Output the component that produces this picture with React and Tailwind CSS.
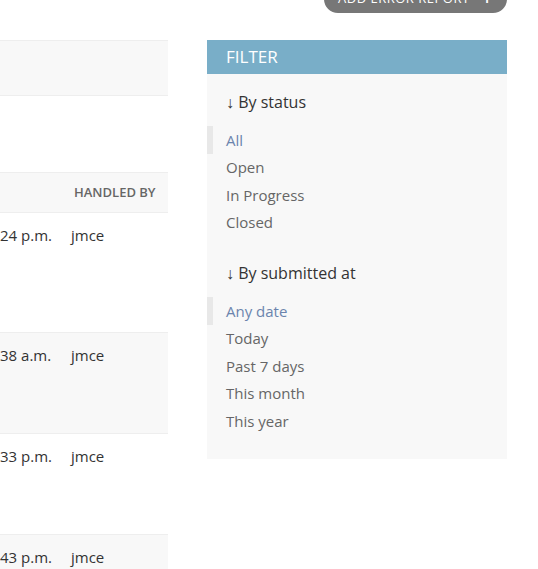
import React from 'react'

const statusChoices = ['All', 'Open', 'In Progress', 'Closed']
const dateChoices = ['Any date', 'Today', 'Past 7 days', 'This month', 'This year']

const rows = [
  { time: '24 p.m.', user: 'jmce', h: 'h-[120px]', bg: 'bg-white' },
  { time: '38 a.m.', user: 'jmce', h: 'h-[101px]', bg: 'bg-[#f8f8f8]' },
  { time: '33 p.m.', user: 'jmce', h: 'h-[101px]', bg: 'bg-white' },
  { time: '43 p.m.', user: 'jmce', h: 'h-[101px]', bg: 'bg-[#f8f8f8]' },
]

const FilterGroup = ({ title, choices }) => (
  <div>
    <h3 className="text-[16px] leading-[24px] text-[#333] pl-[19px]">↓ By {title}</h3>
    <ul className="mt-[12px]">
      {choices.map((c, i) => (
        <li
          key={c}
          className={
            'h-[27.5px] flex items-center text-[15px] border-l-[6px] pl-[13px] ' +
            (i === 0 ? 'border-[#e8e8e8] text-[#6b84ad]' : 'border-transparent text-[#666]')
          }
        >
          {c}
        </li>
      ))}
    </ul>
  </div>
)

const App = () => {
  return (
    <div
      className="w-[538px] h-[569px] overflow-hidden bg-white"
      style={{ fontFamily: '"Open Sans", "Liberation Sans", sans-serif' }}
    >
      <div className="flex justify-end pr-[31px]">
        <a className="-mt-[15px] h-[28px] w-[183px] rounded-[15px] bg-[#777] text-white text-[13px] uppercase tracking-[0.5px] flex items-center pl-[14px] gap-[13px]">
          <span>Add error report</span>
          <span className="text-[16px] font-bold">+</span>
        </a>
      </div>

      <div className="flex mt-[27px]">
        <div className="w-[168px] shrink-0">
          <div className="h-[56px] bg-[#f8f8f8] border-y border-[#eee]"></div>

          <div className="mt-[76px]">
            <div className="h-[41px] flex items-center bg-[#f8f8f8] border-y border-[#eee]">
              <div className="w-[63px]"></div>
              <div className="pl-[11px] text-[13px] font-semibold text-[#666] uppercase">Handled by</div>
            </div>
            {rows.map((r, i) => (
              <div key={i} className={'flex border-b border-[#eee] ' + r.h + ' ' + r.bg}>
                <div className="w-[63px] pt-[11px] text-[15px] text-[#333] whitespace-nowrap">{r.time}</div>
                <div className="pl-[8px] pt-[11px] text-[15px] text-[#333]">{r.user}</div>
              </div>
            ))}
          </div>
        </div>

        <div className="ml-[39px] w-[300px] h-[419px] bg-[#f8f8f8] shrink-0">
          <h2 className="h-[34px] bg-[#79aec8] text-white text-[17px] uppercase flex items-center pl-[19px]">
            Filter
          </h2>
          <div className="pt-[16px]">
            <FilterGroup title="status" choices={statusChoices} />
            <div className="mt-[25px]">
              <FilterGroup title="submitted at" choices={dateChoices} />
            </div>
          </div>
        </div>
      </div>
    </div>
  )
}

export default App
